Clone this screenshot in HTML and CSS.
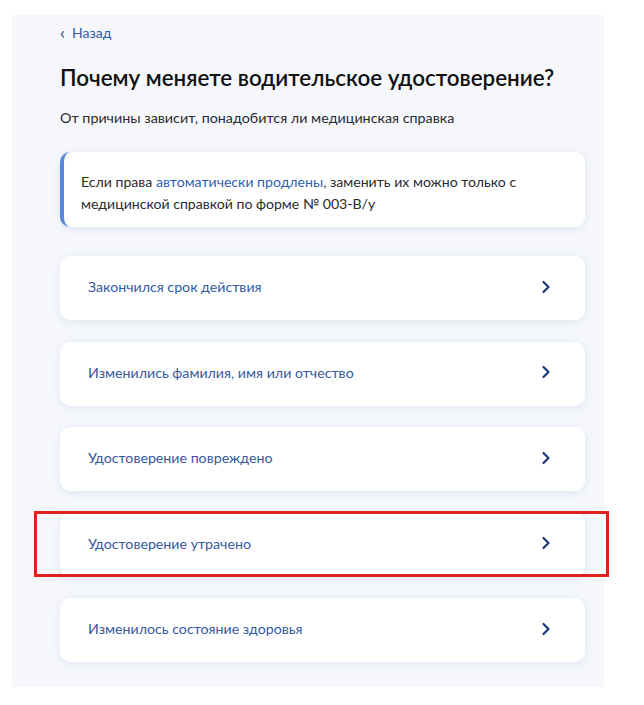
FILE: index.html
```html
<!DOCTYPE html>
<html lang="ru">
<head>
<meta charset="utf-8">
<link rel="stylesheet" href="styles.css">
</head>
<body>
<div class="panel">
  <a class="back" href="#"><span class="back-arrow">‹</span>Назад</a>
  <h1 class="title">Почему меняете водительское удостоверение?</h1>
  <p class="subtitle">От причины зависит, понадобится ли медицинская справка</p>
  <p class="info">Если права <a class="link" href="#">автоматически продлены</a>, заменить их можно только с<br>медицинской справкой по форме № 003-В/у</p>
  <div class="list">
    <a class="card" href="#"><span>Закончился срок действия</span><svg class="chev" viewBox="0 0 10 14"><path d="M2.5 2 L7.5 7 L2.5 12" /></svg></a>
    <a class="card" href="#"><span>Изменились фамилия, имя или отчество</span><svg class="chev" viewBox="0 0 10 14"><path d="M2.5 2 L7.5 7 L2.5 12" /></svg></a>
    <a class="card" href="#"><span>Удостоверение повреждено</span><svg class="chev" viewBox="0 0 10 14"><path d="M2.5 2 L7.5 7 L2.5 12" /></svg></a>
    <a class="card marked" href="#"><span>Удостоверение утрачено</span><svg class="chev" viewBox="0 0 10 14"><path d="M2.5 2 L7.5 7 L2.5 12" /></svg></a>
    <a class="card" href="#"><span>Изменилось состояние здоровья</span><svg class="chev" viewBox="0 0 10 14"><path d="M2.5 2 L7.5 7 L2.5 12" /></svg></a>
  </div>
</div>
</body>
</html>
```
FILE: styles.css
```css
html, body {
  margin: 0;
  padding: 0;
  background: #ffffff;
}
body {
  font-family: Lato, "Noto Sans", sans-serif;
  color: #1b1b1f;
}
.panel {
  margin: 15px 0 0 12px;
  width: 592px;
  box-sizing: border-box;
  padding: 8px 19px 25px 48px;
  background: #f5f7fb;
  height: 672px;
}
.back {
  display: flex;
  align-items: center;
  gap: 7px;
  font-size: 14px;
  line-height: 20px;
  color: #2c5aa8;
  text-decoration: none;
}
.back-arrow {
  font-size: 18px;
  line-height: 20px;
  color: #3a4f7a;
  margin-top: -2px;
}
.title {
  margin: 21px 0 0;
  font-size: 22.4px;
  line-height: 28px;
  font-weight: 600;
  color: #111114;
}
.subtitle {
  margin: 16px 0 0;
  font-size: 14.3px;
  line-height: 20px;
  color: #2a2a2e;
}
.info {
  margin: 24px 0 0;
  background: #ffffff;
  border-radius: 10px;
  border-left: 4px solid #5a86dc;
  padding: 19px 40px 12px 17px;
  font-size: 14.1px;
  line-height: 22px;
  color: #2a2a2e;
  box-shadow: 0 2px 8px rgba(170, 185, 215, 0.25);
}
.link {
  color: #2f5fb3;
  text-decoration: none;
}
.list {
  margin-top: 29px;
  display: flex;
  flex-direction: column;
  gap: 21.5px;
}
.card {
  position: relative;
  height: 64px;
  box-sizing: border-box;
  background: #ffffff;
  border-radius: 10px;
  display: flex;
  align-items: center;
  justify-content: space-between;
  padding: 0 34px 3px 28px;
  font-size: 14.2px;
  color: #34599e;
  text-decoration: none;
  box-shadow: 0 2px 8px rgba(170, 185, 215, 0.28);
}
.chev {
  width: 10px;
  height: 14px;
  fill: none;
  stroke: #1f3a78;
  stroke-width: 2.2;
  stroke-linecap: round;
  stroke-linejoin: round;
}
.marked::after {
  content: "";
  position: absolute;
  left: -26px;
  right: -24px;
  top: -2px;
  bottom: 0;
  border: 3px solid #e0201c;
  pointer-events: none;
}
```
